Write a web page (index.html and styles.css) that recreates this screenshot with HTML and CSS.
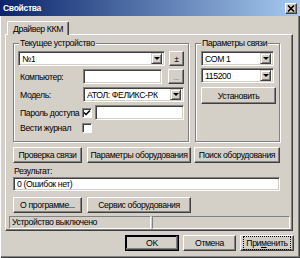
FILE: index.html
```html
<!DOCTYPE html>
<html lang="ru">
<head>
  <meta charset="UTF-8" />
  <title>Свойства</title>
  <link rel="stylesheet" href="styles.css">
</head>
<body>
  <div class="window">
    <div class="titlebar">
      <span class="title">Свойства</span>
      <span class="close">
        <svg width="8" height="7" viewBox="0 0 8 7"><path d="M1 0.5 L7 6.5 M7 0.5 L1 6.5" stroke="#000" stroke-width="1.6"/></svg>
      </span>
    </div>

    <div class="frame">
      <div class="tabs">
        <div class="tab">Драйвер ККМ</div>
      </div>

      <div class="panel">
        <div class="groups">
          <div class="group dev">
            <span class="legend">Текущее устройство</span>
            <div class="row">
              <div class="combo w147"><span class="val">№1</span><span class="arrow"></span></div>
              <button class="btn small first">±</button>
            </div>
            <div class="row">
              <span class="lbl">Компьютер:</span>
              <div class="field w79"></div>
              <button class="btn small dots">...</button>
            </div>
            <div class="row">
              <span class="lbl">Модель:</span>
              <div class="combo w101"><span class="val">АТОЛ: ФЕЛИКС-РК</span><span class="arrow"></span></div>
            </div>
            <div class="row">
              <span class="lbl">Пароль доступа</span>
              <span class="check">
                <svg width="8" height="8" viewBox="0 0 8 8"><path d="M1 3.5 L3 5.5 L7 1.5" stroke="#000" stroke-width="1.5" fill="none"/></svg>
              </span>
              <div class="field w89"></div>
            </div>
            <div class="row last">
              <span class="lbl">Вести журнал</span>
              <span class="check"></span>
            </div>
          </div>

          <div class="group conn">
            <span class="legend">Параметры связи</span>
            <div class="combo w73"><span class="val">COM 1</span><span class="arrow"></span></div>
            <div class="combo w73 second"><span class="val">115200</span><span class="arrow"></span></div>
            <button class="btn setup">Установить</button>
          </div>
        </div>

        <div class="btnrow">
          <button class="btn b69">Проверка связи</button>
          <button class="btn b104 gap5">Параметры оборудования</button>
          <button class="btn b86 gap3">Поиск оборудования</button>
        </div>

        <div class="result-label">Результат:</div>
        <div class="field result">0 (Ошибок нет)</div>

        <div class="btnrow second">
          <button class="btn b69">О программе...</button>
          <button class="btn b104 gap5">Сервис оборудования</button>
        </div>

        <div class="status">
          <div class="cell one">Устройство выключено</div>
          <div class="cell two"></div>
        </div>
      </div>

      <div class="footer">
        <button class="btn dlg default">OK</button>
        <button class="btn dlg w53">Отмена</button>
        <button class="btn dlg focus"><span class="focus-box">При<u>м</u>енить</span></button>
      </div>
    </div>
  </div>
</body>
</html>
```

FILE: styles.css
```css
* {
  box-sizing: border-box;
}

body {
  margin: 0;
  font-family: "Liberation Sans", Arial, sans-serif;
  font-size: 8.7px;
  letter-spacing: -0.4px;
  color: #000;
  background: #d4d0c8;
}

.window {
  width: 300px;
  height: 258px;
  display: flex;
  flex-direction: column;
  background: #d4d0c8;
}

.titlebar {
  height: 16px;
  display: flex;
  align-items: center;
  justify-content: space-between;
  padding: 0 3px 0 3px;
  background: linear-gradient(to right, #0a246a, #a6caf0);
}

.title {
  color: #fff;
  font-weight: bold;
  font-size: 8.5px;
  letter-spacing: -0.3px;
}

.close {
  width: 12px;
  height: 11px;
  display: flex;
  align-items: center;
  justify-content: center;
  background: #d4d0c8;
  border: 1px solid;
  border-color: #fff #404040 #404040 #fff;
  box-shadow: inset -1px -1px 0 #808080;
}

.frame {
  flex: 1;
  display: flex;
  flex-direction: column;
  box-shadow: inset 1px 0 0 #fff, inset -1px -1px 0 #404040, inset -2px -2px 0 #808080;
}

.tabs {
  padding: 5px 0 0 7px;
  display: flex;
}

.tab {
  position: relative;
  z-index: 1;
  width: 62px;
  height: 14px;
  margin-bottom: -1px;
  display: flex;
  align-items: center;
  justify-content: center;
  background: #d4d0c8;
  border: 1px solid;
  border-bottom: none;
  border-color: #fff #404040 #404040 #fff;
  border-radius: 2px 2px 0 0;
  box-shadow: inset -1px 0 0 #808080;
}

.panel {
  margin: 0 7px 0 5px;
  height: 197px;
  padding: 0 12px 0 7px;
  border: 1px solid;
  border-color: #fff #404040 #404040 #fff;
  box-shadow: inset -1px -1px 0 #808080;
}

.groups {
  display: flex;
  gap: 6px;
  margin-top: 8px;
}

.group {
  position: relative;
  height: 99px;
  border: 1px solid #808080;
  box-shadow: inset 1px 1px 0 #fff, 1px 1px 0 #fff;
}

.legend {
  position: absolute;
  top: -6px;
  left: 5px;
  padding: 0 1px;
  line-height: 11px;
  background: #d4d0c8;
}

.dev {
  width: 176px;
  padding: 7px 0 0 4px;
}

.conn {
  width: 85px;
  padding: 7px 0 0 5px;
}

.row {
  display: flex;
  align-items: center;
  height: 15px;
  margin-bottom: 3px;
}

.row.last {
  margin-top: 3px;
  height: 10px;
}

.lbl {
  width: 65px;
  padding-left: 2px;
  white-space: nowrap;
}

.field {
  height: 15px;
  background: #fff;
  border: 1px solid;
  border-color: #808080 #fff #fff #808080;
  box-shadow: inset 1px 1px 0 #404040, inset -1px -1px 0 #d4d0c8;
}

.w79 { width: 79px; }
.w89 { width: 89px; margin-left: 3px; }

.combo {
  height: 15px;
  display: flex;
  align-items: center;
  justify-content: space-between;
  padding: 2px 2px 2px 3px;
  background: #fff;
  border: 1px solid;
  border-color: #808080 #fff #fff #808080;
  box-shadow: inset 1px 1px 0 #404040, inset -1px -1px 0 #d4d0c8;
}

.combo .val {
  white-space: nowrap;
  overflow: hidden;
}

.arrow {
  flex: none;
  width: 11px;
  height: 11px;
  display: flex;
  align-items: center;
  justify-content: center;
  background: #d4d0c8;
  border: 1px solid;
  border-color: #d4d0c8 #404040 #404040 #d4d0c8;
  box-shadow: inset 1px 1px 0 #fff, inset -1px -1px 0 #808080;
}

.arrow::after {
  content: "";
  border-left: 3px solid transparent;
  border-right: 3px solid transparent;
  border-top: 3px solid #000;
}

.w147 { width: 147px; }
.w101 { width: 101px; }
.w73 { width: 73px; }

.conn .second {
  margin-top: 2px;
}

.btn {
  font: inherit;
  letter-spacing: inherit;
  color: #000;
  height: 16px;
  padding: 0;
  background: #d4d0c8;
  border: 1px solid;
  border-color: #fff #404040 #404040 #fff;
  box-shadow: inset -1px -1px 0 #808080;
  white-space: nowrap;
}

.small {
  width: 15px;
  height: 15px;
}

.first {
  margin-left: 4px;
}

.dots {
  width: 16px;
  margin-left: 6px;
  color: #808080;
}

.setup {
  width: 75px;
  height: 17px;
  margin-top: 4px;
}

.check {
  width: 10px;
  height: 10px;
  margin-left: -1px;
  display: flex;
  align-items: center;
  justify-content: center;
  background: #fff;
  border: 1px solid;
  border-color: #808080 #fff #fff #808080;
  box-shadow: inset 1px 1px 0 #404040;
}

.btnrow {
  display: flex;
  margin-top: 5px;
}

.btnrow.second {
  margin-top: 6px;
}

.b69 { width: 69px; }
.b104 { width: 104px; }
.b86 { width: 86px; }
.gap5 { margin-left: 5px; }
.gap3 { margin-left: 3px; }

.result-label {
  margin-top: 3px;
  height: 11px;
  line-height: 11px;
  padding-left: 1px;
}

.result {
  width: 267px;
  height: 14px;
  line-height: 12px;
  padding-left: 3px;
}

.status {
  display: flex;
  gap: 1px;
  margin: 3px -10px 0 -4px;
  height: 13px;
}

.cell {
  height: 13px;
  line-height: 11px;
  padding-left: 2px;
  border: 1px solid;
  border-color: #808080 #fff #fff #808080;
}

.one { width: 142px; }
.two { flex: 1; }

.footer {
  display: flex;
  justify-content: flex-end;
  gap: 4px;
  padding: 4px 6px 0 0;
}

.dlg {
  width: 54px;
}

.dlg.w53 {
  width: 53px;
}

.default {
  outline: 1px solid #000;
  outline-offset: -1px;
  border-color: #fff #404040 #404040 #fff;
  box-shadow: inset -1px -1px 0 #404040, inset -2px -2px 0 #808080, inset 1px 1px 0 #000;
}

.focus-box {
  padding: 1px 2px;
  outline: 1px dotted #000;
}
```
